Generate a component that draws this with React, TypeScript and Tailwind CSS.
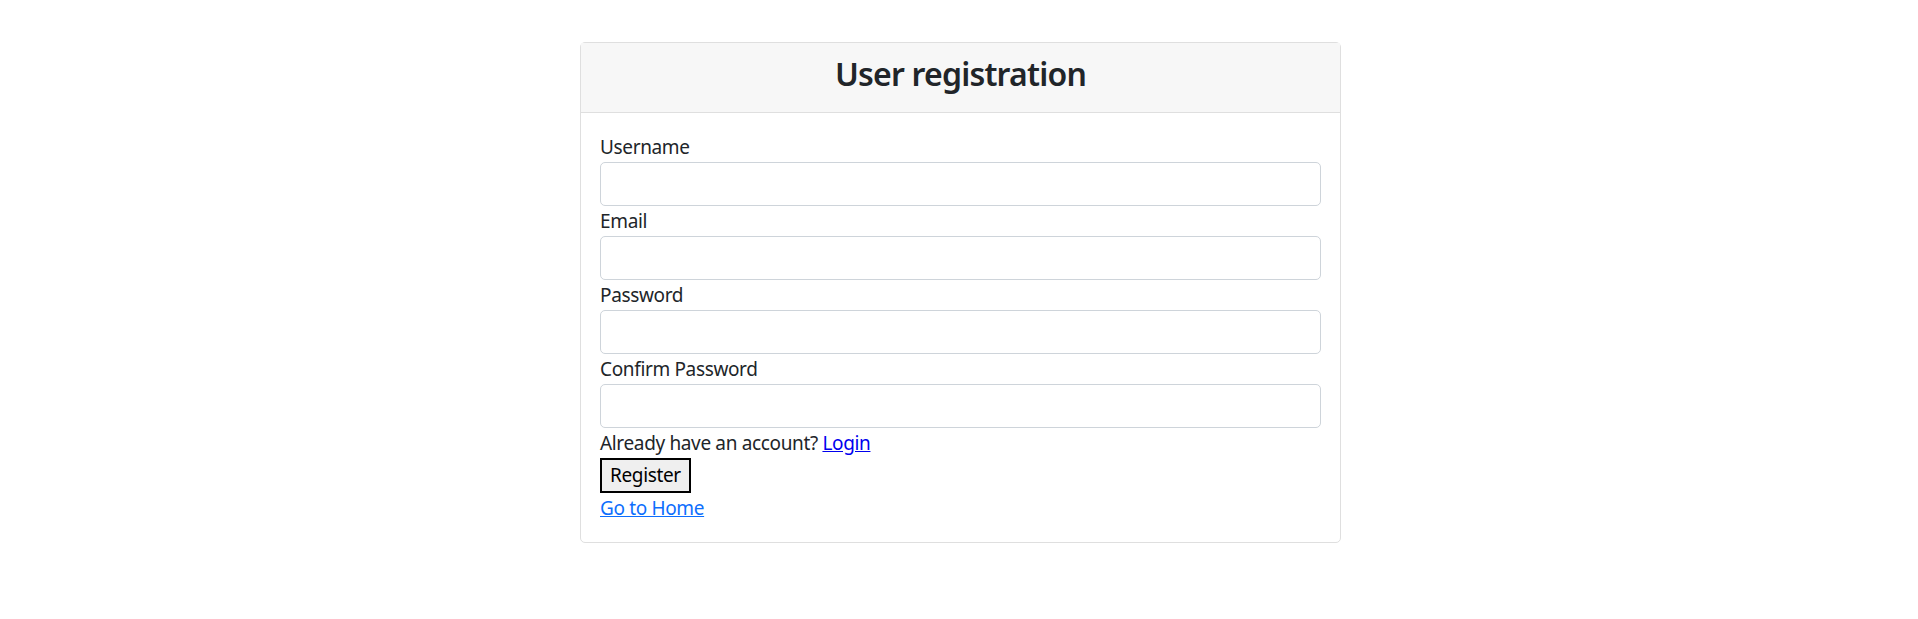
import { useState } from "react";

const fields = [
  { id: "username", label: "Username", type: "text" },
  { id: "email", label: "Email", type: "email" },
  { id: "password", label: "Password", type: "password" },
  { id: "confirm", label: "Confirm Password", type: "password" },
];

export default function App() {
  const [values, setValues] = useState<Record<string, string>>({});

  return (
    <div className="min-h-screen bg-white pt-[42px] pl-[3px] font-['Noto_Sans',sans-serif] text-[#212529]">
      <div className="mx-auto w-[761px] rounded-[5px] border border-[#dfdfdf]">
        <div className="flex h-[70px] items-start justify-center border-b border-[#dfdfdf] bg-[#f7f7f7] pt-[10px]">
          <h2 className="text-[32px] font-semibold leading-[42px] tracking-[-0.8px]">User registration</h2>
        </div>

        <form
          className="flex flex-col px-[19px] pt-[19px] pb-[19px] text-[19px] leading-[30px] tracking-[-0.35px]"
          onSubmit={(e) => e.preventDefault()}
        >
          {fields.map((f) => (
            <div key={f.id} className="flex flex-col">
              <label htmlFor={f.id}>{f.label}</label>
              <input
                id={f.id}
                type={f.type}
                value={values[f.id] ?? ""}
                onChange={(e) => setValues({ ...values, [f.id]: e.target.value })}
                className="h-[44px] w-full rounded-[5px] border border-[#ced4da] bg-white px-3 outline-none"
              />
            </div>
          ))}

          <p>
            Already have an account?{" "}
            <a href="#" className="text-[#0000ee] underline">
              Login
            </a>
          </p>

          <div>
            <button
              type="submit"
              className="h-[35px] border-2 border-black bg-[#efefef] px-[8px] leading-none text-black"
            >
              Register
            </button>
          </div>

          <div>
            <a href="#" className="text-[#0d6efd] underline">
              Go to Home
            </a>
          </div>
        </form>
      </div>
    </div>
  );
}
